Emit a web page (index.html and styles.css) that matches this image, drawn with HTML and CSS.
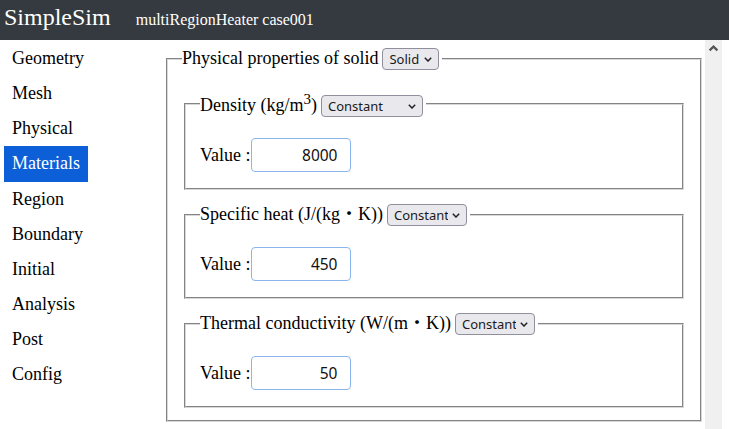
FILE: index.html
```html
<!DOCTYPE html>
<html lang="en">
<head>
<meta charset="utf-8">
<title>SimpleSim</title>
<link rel="stylesheet" href="styles.css">
</head>
<body>
<header class="topbar">
  <span class="brand">SimpleSim</span>
  <span class="case">multiRegionHeater case001</span>
</header>
<div class="layout">
  <nav class="sidebar">
    <a class="nav-item" href="#">Geometry</a>
    <a class="nav-item" href="#">Mesh</a>
    <a class="nav-item" href="#">Physical</a>
    <a class="nav-item active" href="#">Materials</a>
    <a class="nav-item" href="#">Region</a>
    <a class="nav-item" href="#">Boundary</a>
    <a class="nav-item" href="#">Initial</a>
    <a class="nav-item" href="#">Analysis</a>
    <a class="nav-item" href="#">Post</a>
    <a class="nav-item" href="#">Config</a>
  </nav>
  <main class="content">
    <fieldset class="group">
      <legend class="legend">
        <span>Physical properties of solid</span>
        <span class="select-wrap sel-solid">
          <select class="sel"><option>Solid</option></select>
          <svg class="chev" width="8" height="5" viewBox="0 0 8 5"><polyline points="0.8,0.8 4,4 7.2,0.8" fill="none" stroke="#222" stroke-width="1.5"/></svg>
        </span>
      </legend>

      <fieldset class="prop">
        <legend class="legend">
          <span>Density (kg/m<sup>3</sup>)</span>
          <span class="select-wrap sel-wide">
            <select class="sel"><option>Constant</option></select>
            <svg class="chev" width="8" height="5" viewBox="0 0 8 5"><polyline points="0.8,0.8 4,4 7.2,0.8" fill="none" stroke="#222" stroke-width="1.5"/></svg>
          </span>
        </legend>
        <div class="value-row">
          <label class="value-label">Value :</label>
          <input class="value-input" type="text" value="8000">
        </div>
      </fieldset>

      <fieldset class="prop">
        <legend class="legend">
          <span>Specific heat (J/(kg・K))</span>
          <span class="select-wrap sel-narrow">
            <select class="sel"><option>Constant</option></select>
            <svg class="chev" width="8" height="5" viewBox="0 0 8 5"><polyline points="0.8,0.8 4,4 7.2,0.8" fill="none" stroke="#222" stroke-width="1.5"/></svg>
          </span>
        </legend>
        <div class="value-row">
          <label class="value-label">Value :</label>
          <input class="value-input" type="text" value="450">
        </div>
      </fieldset>

      <fieldset class="prop">
        <legend class="legend">
          <span>Thermal conductivity (W/(m・K))</span>
          <span class="select-wrap sel-narrow">
            <select class="sel"><option>Constant</option></select>
            <svg class="chev" width="8" height="5" viewBox="0 0 8 5"><polyline points="0.8,0.8 4,4 7.2,0.8" fill="none" stroke="#222" stroke-width="1.5"/></svg>
          </span>
        </legend>
        <div class="value-row">
          <label class="value-label">Value :</label>
          <input class="value-input" type="text" value="50">
        </div>
      </fieldset>
    </fieldset>
  </main>
  <div class="scrollbar">
    <svg class="scroll-arrow" width="17" height="17" viewBox="0 0 17 17"><polyline points="4.6,10.4 8.5,6.6 12.4,10.4" fill="none" stroke="#555" stroke-width="2.2"/></svg>
  </div>
</div>
</body>
</html>
```

FILE: styles.css
```css
html, body {
  margin: 0;
  height: 100%;
}

body {
  font-family: "Liberation Serif", "Noto Sans CJK JP", serif;
  font-size: 18px;
  color: #000;
  background: #fff;
  display: flex;
  flex-direction: column;
  overflow: hidden;
}

.topbar {
  flex: none;
  height: 40px;
  box-sizing: border-box;
  background: #343a40;
  color: #fff;
  display: flex;
  align-items: baseline;
  padding: 4px 0 0 4px;
}

.brand {
  font-size: 24px;
}

.case {
  font-size: 16px;
  margin-left: 25px;
}

.layout {
  flex: 1;
  min-height: 0;
  display: flex;
}

.sidebar {
  flex: none;
  width: 158px;
  box-sizing: border-box;
  padding: 1px 0 0 4px;
  display: flex;
  flex-direction: column;
  align-items: flex-start;
}

.nav-item {
  flex: none;
  height: 35.15px;
  line-height: 35.15px;
  padding: 0 8px;
  color: #000;
  text-decoration: none;
}

.nav-item.active {
  background: #0d5fd8;
  color: #fff;
}

.content {
  flex: 1;
  min-width: 0;
}

.group {
  margin: 8px 3px 0 8px;
  padding: 7px 16px 12px;
  border: 2px groove #d8d8d8;
}

.legend {
  display: flex;
  align-items: baseline;
  gap: 4px;
  margin-left: -2px;
  padding: 0 3px 0 0;
  line-height: 1.15;
}

.select-wrap {
  position: relative;
  display: inline-block;
}

.sel {
  appearance: none;
  -webkit-appearance: none;
  display: block;
  box-sizing: border-box;
  height: 22px;
  width: 100%;
  margin: 0;
  padding: 0 18px 0 6px;
  font-family: "Noto Sans", "Open Sans", sans-serif;
  font-size: 13px;
  color: #1a1a1a;
  background: #e9e9ed;
  border: 1px solid #8f8f9d;
  border-radius: 4px;
}

.chev {
  position: absolute;
  right: 7px;
  top: 9px;
  pointer-events: none;
}

.sel-solid { width: 57px; }
.sel-wide { width: 102px; }
.sel-narrow { width: 80px; }

.prop {
  margin: 14px 0 0;
  padding: 21px 16px 16px;
  border: 2px groove #d8d8d8;
}

.value-row {
  display: flex;
  align-items: baseline;
  margin-left: -2px;
}

.value-input {
  box-sizing: border-box;
  width: 100px;
  height: 34px;
  margin: 0 0 0 1px;
  padding: 0 13px 0 8px;
  text-align: right;
  font-family: "Noto Sans", "Open Sans", sans-serif;
  font-size: 15.5px;
  color: #111;
  background: #fff;
  border: 1px solid #8ab6f0;
  border-radius: 4px;
  outline: none;
}

.scrollbar {
  flex: none;
  width: 17px;
  margin-right: 7px;
  background: #f0f0f0;
}

.scroll-arrow {
  display: block;
}
```
